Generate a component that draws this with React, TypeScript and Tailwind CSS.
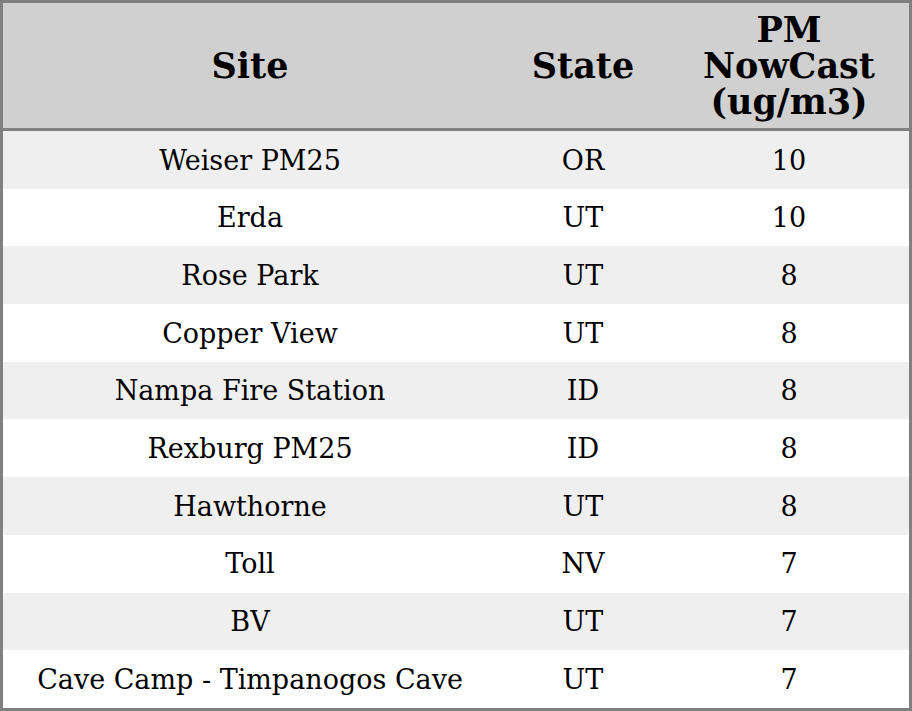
import React from "react";

const rows: [string, string, string][] = [
  ["Weiser PM25", "OR", "10"],
  ["Erda", "UT", "10"],
  ["Rose Park", "UT", "8"],
  ["Copper View", "UT", "8"],
  ["Nampa Fire Station", "ID", "8"],
  ["Rexburg PM25", "ID", "8"],
  ["Hawthorne", "UT", "8"],
  ["Toll", "NV", "7"],
  ["BV", "UT", "7"],
  ["Cave Camp - Timpanogos Cave", "UT", "7"],
];

export default function App() {
  return (
    <div className="w-[912px] h-[711px] border-[3px] border-[#808080] bg-white text-black font-['DejaVu_Serif',serif] flex flex-col">
      <div className="grid grid-cols-[494px_172px_240px] h-[125px] bg-[#d0d0d0] border-b-[3px] border-[#808080] box-content font-bold text-[35px] leading-[36px]">
        <div className="flex items-center justify-center text-center">Site</div>
        <div className="flex items-center justify-center text-center">State</div>
        <div className="flex flex-col items-center justify-center text-center">
          <span>PM</span>
          <span>NowCast</span>
          <span>(ug/m3)</span>
        </div>
      </div>
      {rows.map((r, i) => (
        <div
          key={i}
          className={`grid grid-cols-[494px_172px_240px] h-[57.7px] pt-[2px] text-[27px] ${i % 2 === 0 ? "bg-[#efefef]" : "bg-white"}`}
        >
          <div className="flex items-center justify-center text-center">{r[0]}</div>
          <div className="flex items-center justify-center text-center">{r[1]}</div>
          <div className="flex items-center justify-center text-center">{r[2]}</div>
        </div>
      ))}
    </div>
  );
}
